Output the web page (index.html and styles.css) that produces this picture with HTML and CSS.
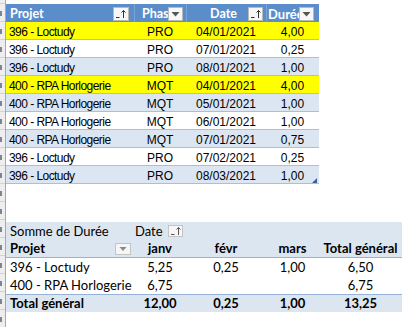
FILE: index.html
```html
<!DOCTYPE html>
<html lang="fr">
<head>
<meta charset="utf-8">
<title>Tableau</title>
<link rel="stylesheet" href="styles.css">
</head>
<body>
<div class="sheet">
  <div class="rownums">
    <div class="rn first"></div>
    <div class="rn"><span class="mk"></span></div>
    <div class="rn"><span class="mk"></span></div>
    <div class="rn"><span class="mk"></span></div>
    <div class="rn"><span class="mk"></span></div>
    <div class="rn"><span class="mk"></span></div>
    <div class="rn"><span class="mk"></span></div>
    <div class="rn"><span class="mk"></span></div>
    <div class="rn"><span class="mk"></span></div>
    <div class="rn"><span class="mk"></span></div>
    <div class="rn"><span class="mk"></span></div>
    <div class="rn"><span class="mk"></span></div>
    <div class="rn"><span class="mk"></span></div>
    <div class="rn"><span class="mk"></span></div>
    <div class="rn"><span class="mk"></span></div>
    <div class="rn"><span class="mk"></span></div>
    <div class="rn"><span class="mk"></span></div>
    <div class="rn"><span class="mk"></span></div>
    <div class="rn"><span class="mk"></span></div>
  </div>
  <div class="content">
    <div class="tbl">
      <div class="trow thead">
        <div class="th th-projet"><span class="lbl">Projet</span><span class="fbtn"><svg width="15" height="14" viewBox="0 0 15 14"><path d="M3 10.5h3.5" stroke="#333" stroke-width="1"/><path d="M10.5 11V3.5M8.5 5.5l2-2 2 2" stroke="#333" stroke-width="1" fill="none"/></svg></span></div>
        <div class="th th-phase"><span class="lbl">Phase</span><span class="fbtn"><svg width="15" height="14" viewBox="0 0 15 14"><path d="M3.5 5h8l-4 4.5z" fill="#555"/></svg></span></div>
        <div class="th th-date"><span class="lbl">Date</span><span class="fbtn"><svg width="15" height="14" viewBox="0 0 15 14"><path d="M3 10.5h3.5" stroke="#333" stroke-width="1"/><path d="M10.5 11V3.5M8.5 5.5l2-2 2 2" stroke="#333" stroke-width="1" fill="none"/></svg></span></div>
        <div class="th th-duree"><span class="lbl">Durée</span><span class="fbtn"><svg width="15" height="14" viewBox="0 0 15 14"><path d="M3.5 5h8l-4 4.5z" fill="#555"/></svg></span></div>
      </div>
      <div class="trow yellow"><div class="td proj">396 - Loctudy</div><div class="td">PRO</div><div class="td">04/01/2021</div><div class="td">4,00</div></div>
      <div class="trow"><div class="td proj">396 - Loctudy</div><div class="td">PRO</div><div class="td">07/01/2021</div><div class="td">0,25</div></div>
      <div class="trow band"><div class="td proj">396 - Loctudy</div><div class="td">PRO</div><div class="td">08/01/2021</div><div class="td">1,00</div></div>
      <div class="trow yellow"><div class="td proj">400 - RPA Horlogerie</div><div class="td">MQT</div><div class="td">04/01/2021</div><div class="td">4,00</div></div>
      <div class="trow band"><div class="td proj">400 - RPA Horlogerie</div><div class="td">MQT</div><div class="td">05/01/2021</div><div class="td">1,00</div></div>
      <div class="trow"><div class="td proj">400 - RPA Horlogerie</div><div class="td">MQT</div><div class="td">06/01/2021</div><div class="td">1,00</div></div>
      <div class="trow band"><div class="td proj">400 - RPA Horlogerie</div><div class="td">MQT</div><div class="td">07/01/2021</div><div class="td">0,75</div></div>
      <div class="trow"><div class="td proj">396 - Loctudy</div><div class="td">PRO</div><div class="td">07/02/2021</div><div class="td">0,25</div></div>
      <div class="trow band"><div class="td proj">396 - Loctudy</div><div class="td">PRO</div><div class="td">08/03/2021</div><div class="td">1,00</div></div>
      <span class="resize"></span>
    </div>

    <div class="pivot">
      <div class="prow phead1">
        <div class="pc pa">Somme de Durée</div>
        <div class="pc pflex"><span class="plbl">Date</span><span class="pbtn"><svg width="15" height="12" viewBox="0 0 15 12"><path d="M3 9.5h3.5" stroke="#555" stroke-width="1"/><path d="M10.5 10V2.5M8.5 4.5l2-2 2 2" stroke="#555" stroke-width="1" fill="none"/></svg></span></div>
        <div class="pc"></div><div class="pc"></div><div class="pc"></div>
      </div>
      <div class="prow phead2">
        <div class="pc pa pflex"><span class="plbl">Projet</span><span class="pbtn dd"><svg width="16" height="12" viewBox="0 0 16 12"><path d="M4.5 4h7l-3.5 4z" fill="#8a8a8a"/></svg></span></div>
        <div class="pc pn">janv</div>
        <div class="pc pn">févr</div>
        <div class="pc pn">mars</div>
        <div class="pc pn">Total général</div>
      </div>
      <div class="prow">
        <div class="pc pa">396 - Loctudy</div>
        <div class="pc pn">5,25</div>
        <div class="pc pn">0,25</div>
        <div class="pc pn">1,00</div>
        <div class="pc pn">6,50</div>
      </div>
      <div class="prow">
        <div class="pc pa">400 - RPA Horlogerie</div>
        <div class="pc pn">6,75</div>
        <div class="pc pn"></div>
        <div class="pc pn"></div>
        <div class="pc pn">6,75</div>
      </div>
      <div class="prow ptotal">
        <div class="pc pa">Total général</div>
        <div class="pc pn">12,00</div>
        <div class="pc pn">0,25</div>
        <div class="pc pn">1,00</div>
        <div class="pc pn">13,25</div>
      </div>
    </div>
  </div>
</div>
</body>
</html>
```

FILE: styles.css
```css
html, body {
  margin: 0;
  padding: 0;
  background: #ffffff;
}

body {
  width: 418px;
  height: 327px;
  overflow: hidden;
}

.sheet {
  display: flex;
  height: 327px;
}

/* clipped Excel row headers on the left */
.rownums {
  flex: none;
  width: 5px;
  background: #eeeeee;
  border-right: 1px solid #a8a8a8;
  overflow: hidden;
}

.rn {
  height: 18px;
  box-sizing: border-box;
  border-bottom: 1px solid #d2d2d2;
  display: flex;
  align-items: center;
}

.rn .mk {
  display: block;
  width: 2px;
  height: 5px;
  margin-top: 2px;
  background: #7d8594;
}

.rn.first {
  height: 4px;
}

.content {
  flex: 1;
  padding-top: 4px;
}

/* ===== Top table ===== */
.tbl {
  position: relative;
  width: 313px;
}

.trow {
  display: grid;
  grid-template-columns: 128px 52px 80px 53px;
  height: 18px;
  box-sizing: border-box;
  border-bottom: 1px solid #a6c0e3;
  background: #ffffff;
}

.trow.band {
  background: #dce6f2;
}

.trow.yellow {
  background: #ffff00;
}

.thead {
  background: #5b8dcb;
  border-bottom: none;
  color: #ffffff;
  font: 700 12.5px Lato, "Open Sans", sans-serif;
}

.th {
  display: flex;
  align-items: center;
  overflow: hidden;
}

.th + .th {
  border-left: 1px solid #7aa3d6;
}

.lbl {
  flex: 1;
  min-width: 0;
  overflow: hidden;
  white-space: nowrap;
  line-height: 18px;
  padding-top: 2px;
}

.fbtn {
  flex: none;
  display: block;
  width: 15px;
  height: 14px;
  margin-top: 2px;
  margin-right: 3px;
  background: #f7f7f7;
  border: 1px solid #b9b9b9;
  box-sizing: border-box;
}

.fbtn svg {
  display: block;
  margin: -1px 0 0 -1px;
}

.th-projet .lbl { padding-left: 4px; }
.th-projet .fbtn { margin-right: 5px; width: 16px; }
.th-phase .lbl { padding-left: 7px; }
.th-date .lbl { text-align: right; padding-right: 11px; }
.th-duree .lbl { padding-left: 1px; font-size: 13px; }
.th-duree .fbtn { margin-right: 5px; }

.td {
  font: 12px "Liberation Sans", Arial, sans-serif;
  color: #000000;
  line-height: 13px;
  padding-top: 4px;
  text-align: center;
  white-space: nowrap;
  overflow: hidden;
}

.td.proj {
  text-align: left;
  padding-left: 3px;
  letter-spacing: -0.55px;
}

.resize {
  position: absolute;
  right: 2px;
  bottom: 1px;
  width: 0;
  height: 0;
  border-left: 5px solid transparent;
  border-bottom: 5px solid #3b5ea8;
}

/* ===== Pivot table ===== */
.pivot {
  margin-top: 38px;
  width: 396px;
  font: 13px Lato, "Open Sans", sans-serif;
  color: #000000;
}

.prow {
  display: grid;
  grid-template-columns: 128px 52px 80px 53px 83px;
  height: 18px;
  box-sizing: border-box;
}

.phead1 {
  background: #dce6f1;
}

.phead2 {
  background: #dce6f1;
  border-bottom: 1px solid #95b3d7;
  font-weight: 700;
}

.ptotal {
  background: #dce6f1;
  border-top: 1px solid #95b3d7;
  font-weight: 700;
}

.pc {
  line-height: 18px;
  white-space: nowrap;
}

.phead2 .pc,
.ptotal .pc {
  line-height: 17px;
}

.pa {
  padding-left: 4px;
}

.pn {
  text-align: center;
}

.pflex {
  display: flex;
  align-items: center;
}

.plbl {
  flex: 1;
  padding-left: 1px;
}

.pa .plbl {
  padding-left: 0;
}

.pbtn {
  flex: none;
  display: block;
  width: 15px;
  height: 12px;
  margin-right: 3px;
  background: #f6f6f6;
  border: 1px solid #c4c4c4;
  box-sizing: border-box;
}

.pbtn.dd {
  width: 16px;
}

.pbtn svg {
  display: block;
  margin: -1px 0 0 -1px;
}
```
